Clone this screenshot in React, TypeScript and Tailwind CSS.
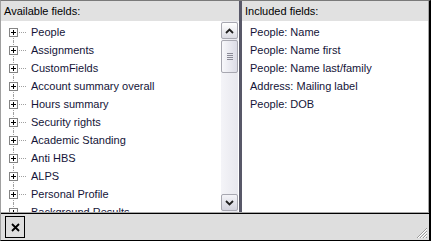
import React from 'react';

const available = [
  'People',
  'Assignments',
  'CustomFields',
  'Account summary overall',
  'Hours summary',
  'Security rights',
  'Academic Standing',
  'Anti HBS',
  'ALPS',
  'Personal Profile',
  'Background Results',
];

const included = [
  'People: Name',
  'People: Name first',
  'People: Name last/family',
  'Address: Mailing label',
  'People: DOB',
];

const font = { fontFamily: '"Liberation Sans", Arial, sans-serif' };

const TreeRow: React.FC<{ label: string; first?: boolean }> = ({ label, first }) => (
  <div className="relative flex h-[18px] items-center">
    {/* vertical connector */}
    <div
      className={`absolute left-[12px] w-0 border-l border-dotted border-[#a0a0a0] ${
        first ? 'top-[9px] bottom-0' : 'top-0 bottom-0'
      }`}
    />
    <div className="relative z-10 ml-[8px] flex h-[9px] w-[9px] items-center justify-center border border-[#848484] bg-white">
      <div className="absolute h-[1px] w-[5px] bg-black" />
      <div className="absolute h-[5px] w-[1px] bg-black" />
    </div>
    <div className="ml-[1px] w-[7px] border-t border-dotted border-[#a0a0a0]" />
    <span className="ml-[5px] whitespace-nowrap text-[11px] text-[#141438]">{label}</span>
  </div>
);

const Scrollbar = () => (
  <div className="flex w-[17px] flex-col bg-gradient-to-r from-[#f4f4f8] to-[#e8e8ee] py-[1px]">
    <div className="flex h-[17px] items-center justify-center rounded-[2px] border border-[#a7a7b0] bg-gradient-to-b from-white to-[#dcdce4]">
      <svg width="9" height="6" viewBox="0 0 9 6">
        <path d="M1 5 L4.5 1.5 L8 5" stroke="#202020" strokeWidth="1.8" fill="none" />
      </svg>
    </div>
    <div className="mt-[1px] flex h-[33px] flex-col items-center justify-center gap-[1px] rounded-[2px] border border-[#a7a7b0] bg-gradient-to-r from-[#f8f8fb] to-[#dcdce6]">
      <div className="h-[1px] w-[6px] bg-[#8a8a96]" />
      <div className="h-[1px] w-[6px] bg-[#8a8a96]" />
      <div className="h-[1px] w-[6px] bg-[#8a8a96]" />
      <div className="h-[1px] w-[6px] bg-[#8a8a96]" />
    </div>
    <div className="flex-1" />
    <div className="flex h-[17px] items-center justify-center rounded-[2px] border border-[#a7a7b0] bg-gradient-to-b from-[#f4f4f8] to-[#d4d4de]">
      <svg width="9" height="6" viewBox="0 0 9 6">
        <path d="M1 1 L4.5 4.5 L8 1" stroke="#202020" strokeWidth="1.8" fill="none" />
      </svg>
    </div>
  </div>
);

export default function App() {
  return (
    <div
      className="flex h-[241px] w-[431px] flex-col border-t border-l border-t-[#7a7a7a] border-l-[#a0a0a0] border-r-2 border-r-black border-b border-b-black bg-[#dedede]"
      style={font}
    >
      <div className="flex h-[212px] border-b border-[#a8a8a8]">
        {/* left panel */}
        <div className="flex w-[238px] flex-col bg-white">
          <div className="flex h-[20px] items-center bg-[#e1e1e1] pl-[3px] text-[11px] text-black">
            Available fields:
          </div>
          <div className="flex flex-1 overflow-hidden">
            <div className="flex-1 overflow-hidden pt-[2px]">
              {available.map((a, i) => (
                <TreeRow key={a} label={a} first={i === 0} />
              ))}
            </div>
            <Scrollbar />
            <div className="w-[1px]" />
          </div>
        </div>
        {/* splitter */}
        <div className="w-[3px] bg-[#585868]" />
        {/* right panel */}
        <div className="flex flex-1 flex-col border-r border-[#a8a8a8] bg-white">
          <div className="flex h-[20px] items-center bg-[#e1e1e1] pl-[3px] text-[11px] text-black">
            Included fields:
          </div>
          <div className="flex flex-col pt-[2px] pl-[8px]">
            {included.map((f) => (
              <div key={f} className="flex h-[18px] items-center text-[11px] text-[#141438]">
                {f}
              </div>
            ))}
          </div>
        </div>
      </div>
      <div className="h-[1px] bg-black" />
      {/* toolbar */}
      <div className="relative flex flex-1 items-center px-[4px]">
        <button className="flex h-[22px] w-[20px] items-center justify-center border border-black bg-[#dedede]">
          <svg width="9" height="9" viewBox="0 0 9 9">
            <path d="M1 1 L8 8 M8 1 L1 8" stroke="#000" strokeWidth="1.8" />
          </svg>
        </button>
        <svg className="absolute right-[1px] bottom-[1px]" width="12" height="12" viewBox="0 0 12 12">
          <path d="M11 1 L1 11 M11 4 L4 11 M11 7 L7 11 M11 10 L10 11" stroke="#9a9a9a" strokeWidth="1" />
          <path d="M11 2 L2 11 M11 5 L5 11 M11 8 L8 11" stroke="#ffffff" strokeWidth="1" />
        </svg>
      </div>
    </div>
  );
}
